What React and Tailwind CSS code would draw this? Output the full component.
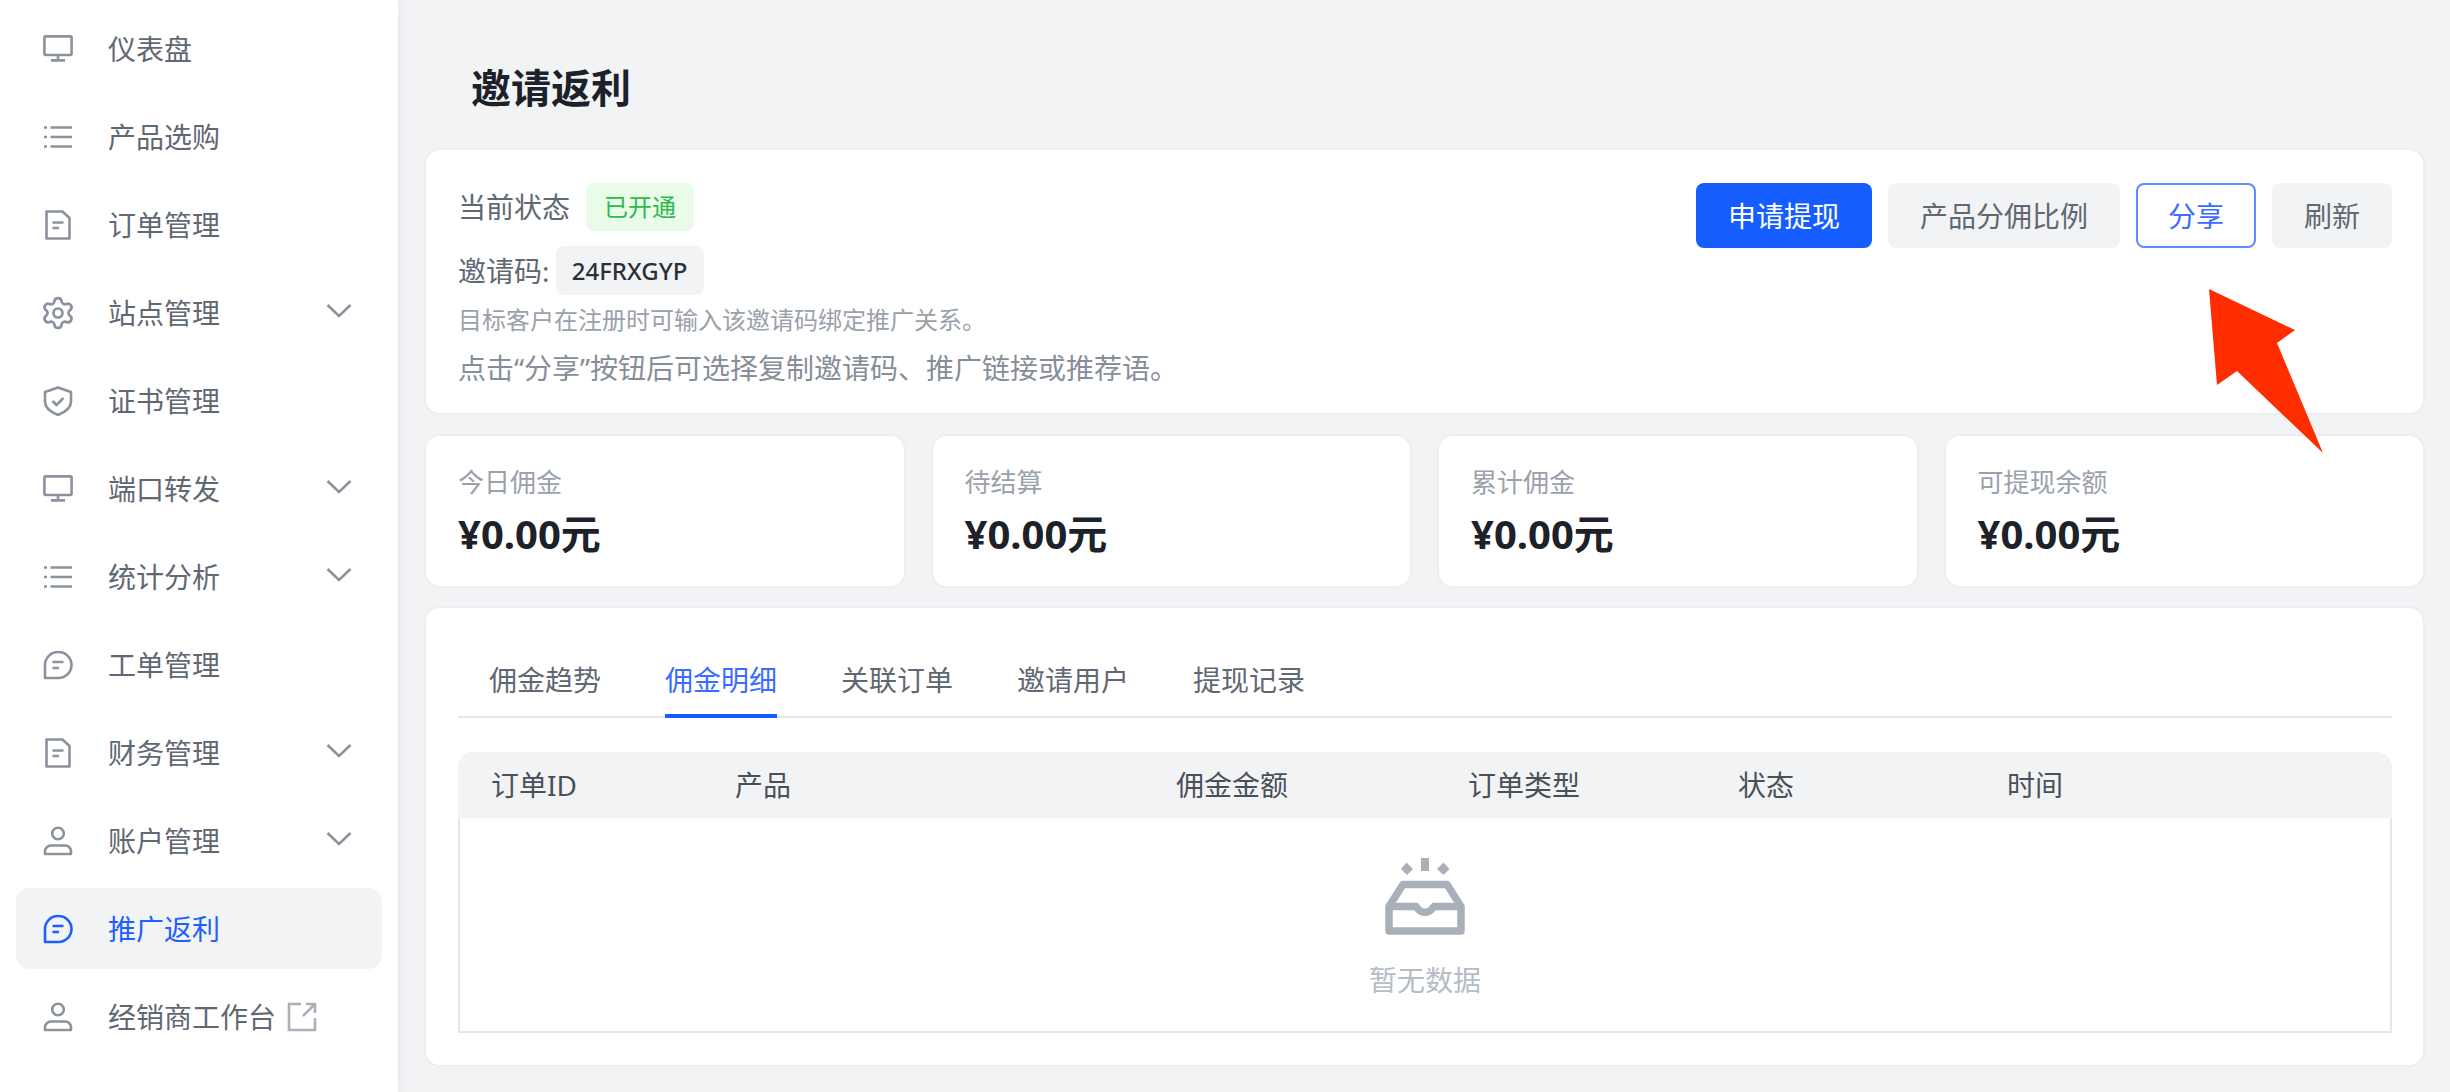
import React from 'react'
import { Settings } from 'lucide-react'

const Desktop = () => (
  <svg width="30" height="30" viewBox="0 0 30 30" fill="none" stroke="currentColor" strokeWidth="2.6">
    <rect x="1.4" y="2.4" width="27.2" height="18.6" rx="1.5" />
    <path d="M15 21v5M8 26.4h14" />
  </svg>
)
const ListIcon = () => (
  <svg width="30" height="30" viewBox="0 0 30 30" fill="none" stroke="currentColor" strokeWidth="2.6">
    <path d="M7.5 5.5h21.5M7.5 15h21.5M7.5 24.5h21.5" />
    <path d="M1 5.5h3M1 15h3M1 24.5h3" />
  </svg>
)
const Doc = () => (
  <svg width="30" height="30" viewBox="0 0 30 30" fill="none" stroke="currentColor" strokeWidth="2.6" strokeLinejoin="round">
    <path d="M3.500 1.500h16L26.500 8v20.500h-23z" />
    <path d="M9.500 12.500h11M9.500 18h6.500" />
  </svg>
)
const Chat = () => (
  <svg width="30" height="30" viewBox="0 0 30 30" fill="none" stroke="currentColor" strokeWidth="2.6" strokeLinejoin="round">
    <path d="M15.500 2a13 13 0 0 1 0 26H2V15.500A13 13 0 0 1 15.500 2z" />
    <path d="M9.500 12h11M9.500 18h6.500" />
  </svg>
)
const UserIcon = () => (
  <svg width="30" height="30" viewBox="0 0 30 30" fill="none" stroke="currentColor" strokeWidth="2.6">
    <circle cx="15" cy="7.500" r="5.800" />
    <path d="M2 28v-2.500a6 6 0 0 1 6-6h14a6 6 0 0 1 6 6V28z" strokeLinejoin="round" />
  </svg>
)
const Gear = () => <Settings size={36} strokeWidth={1.8} className="-m-[3px]" />
const Shield = () => (
  <svg width="30" height="30" viewBox="0 0 30 30" fill="none" stroke="currentColor" strokeWidth="2.6" strokeLinejoin="round">
    <path d="M15 1.500 28 6v9.500c0 6.500-5.500 10.500-13 13.500-7.500-3-13-7-13-13.500V6z" />
    <path d="M9.500 15l4 4 7-7" />
  </svg>
)

const menu = [
  { label: '仪表盘', icon: Desktop },
  { label: '产品选购', icon: ListIcon },
  { label: '订单管理', icon: Doc },
  { label: '站点管理', icon: Gear, arrow: true },
  { label: '证书管理', icon: Shield },
  { label: '端口转发', icon: Desktop, arrow: true },
  { label: '统计分析', icon: ListIcon, arrow: true },
  { label: '工单管理', icon: Chat },
  { label: '财务管理', icon: Doc, arrow: true },
  { label: '账户管理', icon: UserIcon, arrow: true },
  { label: '推广返利', icon: Chat, active: true },
  { label: '经销商工作台', icon: UserIcon, external: true },
]

const stats = ['今日佣金', '待结算', '累计佣金', '可提现余额']
const tabs = ['佣金趋势', '佣金明细', '关联订单', '邀请用户', '提现记录']
const columns = [
  { label: '订单ID', cls: 'w-[244px]' },
  { label: '产品', cls: 'w-[441px]' },
  { label: '佣金金额', cls: 'w-[292px]' },
  { label: '订单类型', cls: 'w-[270px]' },
  { label: '状态', cls: 'w-[269px]' },
  { label: '时间', cls: 'w-[200px]' },
]

export default function App() {
  return (
    <div className="relative flex h-[1092px] w-[2450px] overflow-hidden bg-[#f2f3f5] font-['Noto_Sans','Noto_Sans_CJK_SC',sans-serif] text-[28px] text-[#1d2129]">
      {/* sidebar */}
      <aside className="flex w-[398px] shrink-0 flex-col gap-[7px] bg-white px-[16px] pt-[8px] shadow-[0_0_12px_rgba(30,40,70,0.08)]">
        {menu.map((item) => {
          const Icon = item.icon
          return (
            <div
              key={item.label}
              className={`flex h-[81px] shrink-0 items-center rounded-[14px] pl-[27px] pr-[30px] ${item.active ? 'bg-[#f2f3f5] text-[#1f5eff]' : 'text-[#5f6873]'}`}
            >
              <span className={`mr-[35px] flex ${item.active ? 'text-[#1f5eff]' : 'text-[#8a929d]'}`}>
                <Icon />
              </span>
              <span className="leading-[40px]">{item.label}</span>
              {item.external && (
                <svg className="ml-[11px] text-[#aab0b9]" width="30" height="30" viewBox="0 0 30 30" fill="none" stroke="currentColor" strokeWidth="2.6">
                  <path d="M14 2H2v26h26V16M16 14 28 2M19 2h9v9" />
                </svg>
              )}
              {item.arrow && (
                <svg className="ml-auto -translate-y-[2px] text-[#8a929d]" width="26" height="16" viewBox="0 0 26 16" fill="none" stroke="currentColor" strokeWidth="2.6">
                  <path d="M1.500 2 13 13 24.500 2" />
                </svg>
              )}
            </div>
          )
        })}
      </aside>

      {/* main */}
      <main className="flex-1 pl-[26px] pr-[25px]">
        <h1 className="ml-[47px] mt-[68px] mb-[40px] text-[40px] font-bold leading-[40px] text-[#1d2129]">邀请返利</h1>

        <section className="flex h-[267px] justify-between rounded-[16px] border-2 border-[#eceef1] bg-white pl-[32px] pr-[31px] pt-[33px]">
          <div>
            <div className="flex h-[48px] items-center">
              <span className="text-[#5f6873]">当前状态</span>
              <span className="ml-[16px] flex h-[48px] w-[108px] items-center justify-center rounded-[8px] bg-[#e8fce8] text-[24px] text-[#2fb84f]">已开通</span>
            </div>
            <div className="mt-[15px] flex h-[49px] items-center">
              <span className="text-[#5f6873]">邀请码:</span>
              <span className="ml-[6px] flex h-[49px] w-[148px] items-center justify-center rounded-[8px] bg-[#f2f3f5] text-[24px] font-medium text-[#2b3038]">24FRXGYP</span>
            </div>
            <p className="mt-[7px] text-[24px] leading-[36px] text-[#9aa1ab]">目标客户在注册时可输入该邀请码绑定推广关系。</p>
            <p className="mt-[10px] leading-[40px] text-[#868e99]">点击“分享”按钮后可选择复制邀请码、推广链接或推荐语。</p>
          </div>
          <div className="flex gap-[16px]">
            <button className="h-[65px] w-[176px] rounded-[8px] bg-[#165dff] text-white">申请提现</button>
            <button className="h-[65px] w-[232px] rounded-[8px] bg-[#f2f3f5] text-[#5f6873]">产品分佣比例</button>
            <button className="h-[65px] w-[120px] rounded-[8px] border-2 border-[#5f8bff] bg-white text-[#3a6cff]">分享</button>
            <button className="h-[65px] w-[120px] rounded-[8px] bg-[#f2f3f5] text-[#5f6873]">刷新</button>
          </div>
        </section>

        <section className="mt-[19px] grid grid-cols-4 gap-[25px]">
          {stats.map((label) => (
            <div key={label} className="h-[154px] rounded-[16px] border-2 border-[#eceef1] bg-white pl-[32px] pt-[27px]">
              <div className="text-[26px] leading-[38px] text-[#9aa1ab]">{label}</div>
              <div className="mt-[8px] text-[40px] font-bold leading-[50px] text-[#1d2129]">¥0.00元</div>
            </div>
          ))}
        </section>

        <section className="mt-[18px] h-[461px] rounded-[16px] border-2 border-[#eceef1] bg-white pl-[32px] pr-[31px] pt-[50px]">
          <div className="flex gap-[64px] border-b-2 border-[#e5e6eb] pl-[31px]">
            {tabs.map((tab, i) => (
              <div key={tab} className={`-mb-[2px] h-[60px] leading-[44px] ${i === 1 ? 'border-b-4 border-[#165dff] text-[#3a6cff]' : 'text-[#5f6873]'}`}>
                {tab}
              </div>
            ))}
          </div>
          <div className="mt-[34px] h-[281px] rounded-t-[16px] border-x-2 border-b-2 border-[#e5e6eb]">
            <div className="-mx-[2px] flex h-[66px] items-center rounded-t-[16px] bg-[#f2f3f5] pl-[33px] text-[#4a5059]">
              {columns.map((c) => (
                <div key={c.label} className={c.cls}>{c.label}</div>
              ))}
            </div>
            <div className="flex flex-col items-center pt-[40px]">
              <svg width="80" height="78" viewBox="0 0 80 78" fill="none" stroke="#a9b0b9">
                <g fill="#a9b0b9" stroke="none">
                  <rect x="36" y="0" width="8" height="13" />
                  <path d="M21.500 4.500 28 11l-6 6-6-6zM58.500 4.500 64.500 11l-6 6-6.500-6z" />
                </g>
                <g strokeWidth="7.500" strokeLinejoin="round">
                  <path d="M18 26.500h44l14 22V73H4V48.500z" />
                  <path d="M4 48.500h27l2 2.500a9 9 0 0 0 14 0l2-2.500h27" />
                </g>
              </svg>
              <div className="mt-[22px] leading-[44px] text-[#b6bcc5]">暂无数据</div>
            </div>
          </div>
        </section>
      </main>

      {/* annotation arrow drawn on the screenshot */}
      <svg className="absolute left-0 top-0" width="2450" height="1092" viewBox="0 0 2450 1092">
        <path d="M2209 289 2295 330 2277 343 2323 453 2237 371 2217 385z" fill="#ff2d00" />
      </svg>
    </div>
  )
}
